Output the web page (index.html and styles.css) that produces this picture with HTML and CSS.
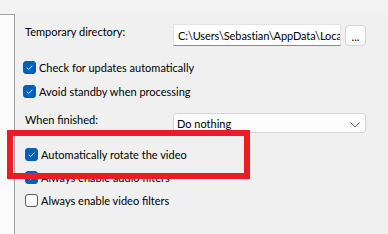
FILE: index.html
```html
<!DOCTYPE html>
<html>
<head>
<meta charset="utf-8">
<link rel="stylesheet" href="styles.css">
</head>
<body>
<div class="top"></div>
<div class="frame">
  <div class="side"></div>
  <div class="main">
    <div class="row dir-row">
      <span class="label">Temporary directory:</span>
      <div class="textbox"><span class="path">C:\Users\Sebastian\AppData\Loca</span></div>
      <button class="browse">...</button>
    </div>
    <label class="check upper first"><span class="box on"><svg viewBox="0 0 12 12"><path d="M3 6.2 L5.1 8.2 L9.2 4"/></svg></span>Check for updates automatically</label>
    <label class="check upper"><span class="box on"><svg viewBox="0 0 12 12"><path d="M3 6.2 L5.1 8.2 L9.2 4"/></svg></span>Avoid standby when processing</label>
    <div class="row finish-row">
      <span class="label finish-label">When finished:</span>
      <div class="select">Do nothing<svg class="chev" viewBox="0 0 10 6"><path d="M0.5 0.5 L5 5 L9.5 0.5"/></svg></div>
    </div>
    <div class="lower">
      <label class="check"><span class="box on"><svg viewBox="0 0 12 12"><path d="M3 6.2 L5.1 8.2 L9.2 4"/></svg></span>Automatically rotate the video</label>
      <label class="check"><span class="box on"><svg viewBox="0 0 12 12"><path d="M3 6.2 L5.1 8.2 L9.2 4"/></svg></span>Always enable audio filters</label>
      <label class="check"><span class="box"></span>Always enable video filters</label>
    </div>
  </div>
</div>
<div class="highlight"></div>
</body>
</html>
```
FILE: styles.css
```css
html, body {
  margin: 0;
  padding: 0;
}
body {
  width: 388px;
  height: 234px;
  overflow: hidden;
  background: #f0f0f0;
  font-family: Lato, "Noto Sans", sans-serif;
  font-size: 11px;
  color: #000;
  position: relative;
}
.top {
  height: 14px;
  background: #f3f3f3;
}
.frame {
  display: flex;
  height: 220px;
}
.side {
  flex: none;
  background: #fbfbfb;
  border-top: 1px solid #a0a0a0;
  border-right: 1px solid #a0a0a0;
  box-sizing: border-box;
  width: 15px;
}
.main {
  flex: 1;
  padding: 10px 0 0 8px;
}
.row {
  display: flex;
  align-items: center;
}
.label {
  width: 148px;
  flex: none;
  padding-left: 2px;
}
.dir-row {
  height: 22px;
}
.dir-row .label {
  margin-top: -7px;
}
.textbox {
  width: 168px;
  height: 22px;
  box-sizing: border-box;
  background: #fff;
  border: 1px solid #e3e3e3;
  border-bottom-color: #8a8a8a;
  padding: 3px 0 0 4px;
  white-space: nowrap;
  overflow: hidden;
  line-height: 15px;
}
.path {
  letter-spacing: -0.1px;
}
.browse {
  margin-left: 4px;
  width: 21px;
  height: 21px;
  padding: 3px 0 0 0;
  box-sizing: border-box;
  border: 1px solid #d5d5d5;
  border-radius: 4px;
  background: #fbfbfb;
  font-family: inherit;
  font-size: 11px;
  color: #000;
  line-height: 1;
}
.check {
  display: flex;
  align-items: center;
  height: 24px;
}
.upper.first {
  margin-top: 9px;
}
.box {
  width: 13px;
  height: 13px;
  box-sizing: border-box;
  border: 1px solid #5c5c5c;
  border-radius: 3px;
  background: #fbfbfb;
  margin-right: 3px;
  flex: none;
}
.box.on {
  background: #005fb8;
  border-color: #005fb8;
}
.box svg {
  display: block;
  width: 11px;
  height: 11px;
}
.box svg path {
  fill: none;
  stroke: #fff;
  stroke-width: 1;
}
.finish-row {
  margin-top: 10px;
  height: 20px;
}
.finish-label {
  margin-top: -7px;
}
.select {
  width: 193px;
  height: 20px;
  box-sizing: border-box;
  background: #fdfdfd;
  border: 1px solid #d5d5d5;
  border-radius: 3px;
  padding: 2px 0 0 3px;
  line-height: 15px;
  position: relative;
}
.chev {
  position: absolute;
  right: 5px;
  top: 8px;
  width: 10px;
  height: 6px;
}
.chev path {
  fill: none;
  stroke: #606060;
  stroke-width: 1;
}
.lower {
  margin-top: 10px;
  padding-left: 2px;
}
.lower .check {
  height: 23px;
}
.highlight {
  position: absolute;
  left: 7px;
  top: 130px;
  width: 243px;
  height: 49px;
  box-sizing: border-box;
  border: 6px solid #ed1c24;
}
```
